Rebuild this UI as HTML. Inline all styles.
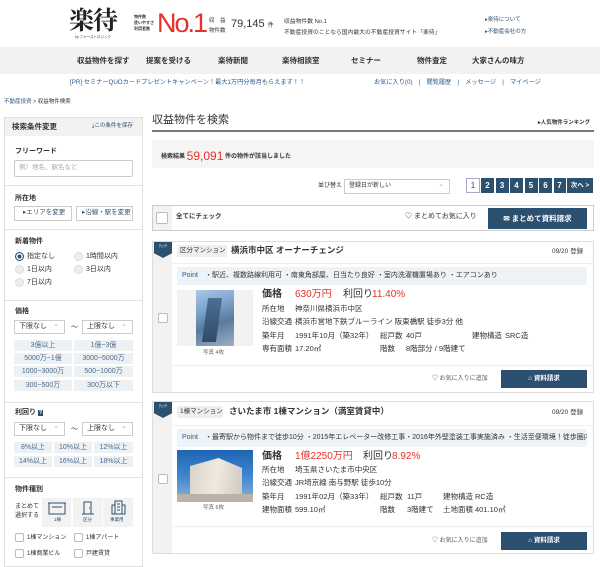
<!DOCTYPE html>
<html><head><meta charset="utf-8">
<style>
*{margin:0;padding:0;box-sizing:border-box}
body{width:600px;height:560px;overflow:hidden;background:#fff;font-family:"Liberation Sans","Noto Sans CJK JP",sans-serif;color:#333;position:relative}
.t{position:absolute;white-space:nowrap;line-height:1}
.b{position:absolute}
.nav span{position:absolute;top:57px;font-size:7.5px;font-weight:bold;color:#333;line-height:1}
.chip{position:absolute;background:#eef1f4;color:#4a6a8a;font-size:7px;text-align:center;line-height:11px;height:11px}
.sel{position:absolute;border:1px solid #ccc;background:#fff;font-size:7px;line-height:12px;padding-left:4px;height:14px}
.sel:after{content:"⌄";position:absolute;right:5px;top:-2px;color:#aaa;font-size:7px}
.radio{position:absolute;width:9px;height:9px;border-radius:50%;background:#eee;border:1px solid #ddd}
.cb{position:absolute;width:9px;height:9px;border:1px solid #bbb;border-radius:2px;background:#fff}
.lbl{position:absolute;font-size:7px;line-height:1;white-space:nowrap}
.hr{position:absolute;height:1px;background:#e3e3e3}
.pg{position:absolute;top:178px;height:15px;background:#2c5070;color:#fff;font-size:8px;text-align:center;line-height:15px;font-weight:bold}
.row{position:absolute;font-size:7.5px;line-height:1;white-space:nowrap}
.btn{position:absolute;background:#2c5070;color:#fff;font-size:7.5px;font-weight:bold;text-align:center}
.tag{position:absolute;width:18px;height:16px;background:#2c5070;color:#fff;font-size:4px;text-align:center;line-height:8px;clip-path:polygon(0 0,100% 0,100% 70%,50% 100%,0 70%)}
</style></head><body>

<!-- header -->
<div class="t" style="left:69px;top:7px;font-size:25px;font-weight:bold;color:#222;font-family:'Noto Serif CJK SC',serif;letter-spacing:-1px">楽待</div>
<div class="t" style="left:75px;top:36px;font-size:3.5px;color:#333">by ファーストロジック</div>
<div class="t" style="left:134px;top:14px;font-size:4px;line-height:6px;font-weight:bold">物件数<br>使いやすさ<br>利用者数</div>
<div class="t" style="left:157px;top:10px;font-size:27px;color:#e8302a;letter-spacing:-2px">No.1</div>
<div class="t" style="left:209px;top:16px;font-size:5.5px;line-height:10px">収　益<br>物件数</div>
<div class="t" style="left:231px;top:19px;font-size:11px">79,145 <span style="font-size:6px">件</span></div>
<div class="t" style="left:284px;top:17px;font-size:5.8px;line-height:11px">収益物件数 No.1<br>不動産投資のことなら国内最大の不動産投資サイト「楽待」</div>
<div class="t" style="left:485px;top:14px;font-size:5.5px;line-height:12px;color:#2c5070">▸楽待について<br>▸不動産会社の方</div>

<div class="b" style="left:0;top:47px;width:600px;height:27px;background:#f2f2f2"></div>
<div class="nav">
<span style="left:77px">収益物件を探す</span><span style="left:146px">提案を受ける</span><span style="left:218px">楽待新聞</span><span style="left:282px">楽待相談室</span><span style="left:351px">セミナー</span><span style="left:417px">物件査定</span><span style="left:472px">大家さんの味方</span>
</div>
<div class="t" style="left:70px;top:80px;font-size:6.2px;color:#2c5a8a">[PR] セミナーQUOカードプレゼントキャンペーン！最大1万円分毎月もらえます！！</div>
<div class="t" style="left:374px;top:80px;font-size:6.2px;color:#2c5a8a">お気に入り(0)　|　閲覧履歴　|　メッセージ　|　マイページ</div>
<div class="t" style="left:4px;top:100px;font-size:5.5px"><span style="color:#2c5a8a">不動産投資</span> &gt; 収益物件検索</div>

<!-- sidebar -->
<div class="b" style="left:4px;top:117px;width:139px;height:450px;border:1px solid #e0e0e0"></div>
<div class="b" style="left:5px;top:118px;width:137px;height:18px;background:#f2f2f2"></div>
<div class="t" style="left:12px;top:123px;font-size:7.5px;font-weight:bold">検索条件変更</div>
<div class="t" style="left:92px;top:124px;font-size:5.5px;color:#2c5070">⤓この条件を保存</div>
<div class="t" style="left:15px;top:148px;font-size:7px;font-weight:bold">フリーワード</div>
<div class="b" style="left:14px;top:160px;width:119px;height:17px;border:1px solid #ccc;border-radius:2px"></div>
<div class="t" style="left:19px;top:165px;font-size:6.5px;color:#aaa">例）地名、駅名など</div>
<div class="hr" style="left:5px;top:185px;width:137px"></div>
<div class="t" style="left:15px;top:195px;font-size:7px;font-weight:bold">所在地</div>
<div class="b" style="left:14px;top:206px;width:58px;height:15px;border:1px solid #ccc"></div>
<div class="b" style="left:76px;top:206px;width:57px;height:15px;border:1px solid #ccc"></div>
<div class="t" style="left:23px;top:210px;font-size:6.5px;color:#2c5070">▸エリアを変更</div>
<div class="t" style="left:82px;top:210px;font-size:6.5px;color:#2c5070">▸沿線・駅を変更</div>
<div class="hr" style="left:5px;top:229px;width:137px"></div>
<div class="t" style="left:15px;top:238px;font-size:7px;font-weight:bold">新着物件</div>
<div class="radio" style="left:15px;top:252px;background:#2c5070;border-color:#2c5070;box-shadow:inset 0 0 0 1.5px #fff"></div>
<div class="lbl" style="left:27px;top:253px">指定なし</div>
<div class="radio" style="left:74px;top:252px"></div><div class="lbl" style="left:86px;top:253px">1時間以内</div>
<div class="radio" style="left:15px;top:265px"></div><div class="lbl" style="left:27px;top:266px">1日以内</div>
<div class="radio" style="left:74px;top:265px"></div><div class="lbl" style="left:86px;top:266px">3日以内</div>
<div class="radio" style="left:15px;top:278px"></div><div class="lbl" style="left:27px;top:279px">7日以内</div>
<div class="hr" style="left:5px;top:300px;width:137px"></div>
<div class="t" style="left:15px;top:308px;font-size:7px;font-weight:bold">価格</div>
<div class="sel" style="left:14px;top:320px;width:51px">下限なし</div>
<div class="t" style="left:71px;top:324px;font-size:7px">〜</div>
<div class="sel" style="left:82px;top:320px;width:51px">上限なし</div>
<div class="chip" style="left:14px;top:340px;width:58px">3億以上</div><div class="chip" style="left:74px;top:340px;width:59px">1億~3億</div>
<div class="chip" style="left:14px;top:353px;width:58px">5000万~1億</div><div class="chip" style="left:74px;top:353px;width:59px">3000~5000万</div>
<div class="chip" style="left:14px;top:366px;width:58px">1000~3000万</div><div class="chip" style="left:74px;top:366px;width:59px">500~1000万</div>
<div class="chip" style="left:14px;top:380px;width:58px">300~500万</div><div class="chip" style="left:74px;top:380px;width:59px">300万以下</div>
<div class="hr" style="left:5px;top:402px;width:137px"></div>
<div class="t" style="left:15px;top:409px;font-size:7px;font-weight:bold">利回り <span style="background:#2c5070;color:#fff;font-size:5px;padding:0 1px">?</span></div>
<div class="sel" style="left:14px;top:422px;width:51px">下限なし</div>
<div class="t" style="left:71px;top:426px;font-size:7px">〜</div>
<div class="sel" style="left:82px;top:422px;width:51px">上限なし</div>
<div class="chip" style="left:14px;top:442px;width:38px">8%以上</div><div class="chip" style="left:54px;top:442px;width:38px">10%以上</div><div class="chip" style="left:94px;top:442px;width:39px">12%以上</div>
<div class="chip" style="left:14px;top:456px;width:38px">14%以上</div><div class="chip" style="left:54px;top:456px;width:38px">16%以上</div><div class="chip" style="left:94px;top:456px;width:39px">18%以上</div>
<div class="hr" style="left:5px;top:477px;width:137px"></div>
<div class="t" style="left:15px;top:486px;font-size:7px;font-weight:bold">物件種別</div>
<div class="t" style="left:15px;top:503px;font-size:6px;line-height:9px">まとめて<br>選択する</div>
<div class="b" style="left:42px;top:498px;width:29px;height:29px;background:#f2f2f2"></div>
<div class="b" style="left:73px;top:498px;width:29px;height:29px;background:#f2f2f2"></div>
<div class="b" style="left:103px;top:498px;width:30px;height:29px;background:#f2f2f2"></div>
<svg class="b" style="left:48px;top:501px" width="18" height="14" viewBox="0 0 18 14" fill="none" stroke="#2c5070" stroke-width="1"><rect x="1" y="2" width="16" height="11"/><line x1="0" y1="2" x2="18" y2="2"/><line x1="4" y1="6" x2="14" y2="6"/></svg>
<svg class="b" style="left:81px;top:501px" width="14" height="14" viewBox="0 0 14 14" fill="none" stroke="#2c5070" stroke-width="1"><path d="M3 13V1h7v12M1 13h12M8 7h1"/></svg>
<svg class="b" style="left:111px;top:500px" width="15" height="15" viewBox="0 0 15 15" fill="none" stroke="#2c5070" stroke-width="1"><rect x="4" y="1" width="7" height="13"/><rect x="1" y="5" width="3" height="9"/><rect x="11" y="5" width="3" height="9"/><path d="M6 4h3M6 7h3M6 10h3"/></svg>
<div class="t" style="left:54px;top:518px;font-size:4.5px;color:#2c5070">1棟</div>
<div class="t" style="left:83px;top:518px;font-size:4.5px;color:#2c5070">区分</div>
<div class="t" style="left:110px;top:518px;font-size:4.5px;color:#2c5070">事業用</div>
<div class="cb" style="left:15px;top:533px"></div><div class="lbl" style="left:27px;top:535px;font-size:6px">1棟マンション</div>
<div class="cb" style="left:74px;top:533px"></div><div class="lbl" style="left:86px;top:535px;font-size:6px">1棟アパート</div>
<div class="cb" style="left:15px;top:549px"></div><div class="lbl" style="left:27px;top:551px;font-size:6px">1棟商業ビル</div>
<div class="cb" style="left:74px;top:549px"></div><div class="lbl" style="left:86px;top:551px;font-size:6px">戸建賃貸</div>

<!-- main -->
<div class="t" style="left:152px;top:115px;font-size:11px;color:#333">収益物件を検索</div>
<div class="t" style="left:538px;top:121px;font-size:5.5px;font-weight:bold">▸人気物件ランキング</div>
<div class="b" style="left:152px;top:130px;width:442px;height:1.5px;background:#777"></div>
<div class="b" style="left:152px;top:140px;width:442px;height:28px;background:#f5f5f5"></div>
<div class="t" style="left:161px;top:150px;font-size:6px;font-weight:bold">検索結果 <span style="color:#e8302a;font-size:12px;font-weight:normal;vertical-align:-2px">59,091</span> 件の物件が該当しました</div>
<div class="t" style="left:318px;top:183px;font-size:6px">並び替え</div>
<div class="sel" style="left:344px;top:179px;width:106px;height:15px;font-size:6px;line-height:13px">登録日が新しい</div>
<div class="b" style="left:466px;top:178px;width:14px;height:15px;border:1px solid #aac;color:#2c5070;font-size:8px;text-align:center;line-height:13px">1</div>
<div class="pg" style="left:481px;width:13px">2</div><div class="pg" style="left:495.5px;width:13px">3</div><div class="pg" style="left:510px;width:13px">4</div><div class="pg" style="left:524.5px;width:13px">5</div><div class="pg" style="left:539px;width:13px">6</div><div class="pg" style="left:553.5px;width:12px">7</div><div class="pg" style="left:567px;width:26px;font-size:6.5px">次へ &gt;</div>

<div class="b" style="left:152px;top:205px;width:442px;height:26px;border:1px solid #ccc"></div>
<div class="b" style="left:153px;top:206px;width:19px;height:24px;background:#f2f2f2"></div>
<div class="cb" style="left:156px;top:212px;width:12px;height:12px"></div>
<div class="t" style="left:176px;top:214px;font-size:6.5px;font-weight:bold">全てにチェック</div>
<div class="t" style="left:405px;top:213px;font-size:7px">♡ まとめてお気に入り</div>
<div class="btn" style="left:488px;top:208px;width:99px;height:21px;line-height:21px;font-size:7.5px">✉ まとめて資料請求</div>

<!-- card 1 -->
<div class="b" style="left:152px;top:241px;width:442px;height:152px;border:1px solid #ddd"></div>
<div class="b" style="left:153px;top:242px;width:19px;height:150px;background:#f2f2f2"></div>
<div class="tag" style="left:154px;top:242px">ﾁｪｯｸ</div>
<div class="cb" style="left:158px;top:313px;width:10px;height:10px"></div>
<div class="b" style="left:177px;top:245px;width:50px;height:12px;background:#eee"></div>
<div class="t" style="left:180px;top:248px;font-size:6.5px">区分マンション</div>
<div class="t" style="left:231px;top:246px;font-size:8.5px;font-weight:bold">横浜市中区 オーナーチェンジ</div>
<div class="t" style="left:552px;top:249px;font-size:6.5px">09/20 登録</div>
<div class="hr" style="left:172px;top:263px;width:421px;background:#eee"></div>
<div class="b" style="left:177px;top:267px;width:410px;height:18px;background:#eef3f8;overflow:hidden">
<div class="t" style="left:5px;top:5px;font-size:7px"><span style="color:#2c5a8a">Point</span>　・駅近、複数路線利用可 ・南東角部屋、日当たり良好 ・室内洗濯機置場あり ・エアコンあり</div></div>
<div class="b" style="left:177px;top:290px;width:76px;height:56px;background:#f2f2f2"></div>
<div class="b" style="left:196px;top:290px;width:38px;height:56px;background:linear-gradient(160deg,#a9c8ea 0%,#7aa0c8 35%,#5b7a9c 60%,#9db0c6 100%)"></div>
<div class="b" style="left:205px;top:298px;width:14px;height:44px;background:linear-gradient(#4b6f96,#2f4c6c);transform:skewX(-8deg)"></div>
<div class="t" style="left:203px;top:351px;font-size:5.5px;color:#666">写真 4枚</div>
<div class="t" style="left:262px;top:290px;font-size:10px;font-weight:bold">価格</div>
<div class="t" style="left:295px;top:290px;font-size:10px;color:#e8302a">630万円</div>
<div class="t" style="left:343px;top:290px;font-size:10px">利回り</div>
<div class="t" style="left:372px;top:290px;font-size:10px;color:#e8302a">11.40%</div>
<div class="row" style="left:262px;top:305px">所在地</div><div class="row" style="left:295px;top:305px">神奈川県横浜市中区</div>
<div class="row" style="left:262px;top:318px">沿線交通</div><div class="row" style="left:295px;top:318px">横浜市営地下鉄ブルーライン 阪東橋駅 徒歩3分 他</div>
<div class="row" style="left:262px;top:332px">築年月</div><div class="row" style="left:295px;top:332px">1991年10月（築32年）</div>
<div class="row" style="left:380px;top:332px">総戸数</div><div class="row" style="left:406px;top:332px">40戸</div>
<div class="row" style="left:472px;top:332px">建物構造</div><div class="row" style="left:505px;top:332px">SRC造</div>
<div class="row" style="left:262px;top:345px">専有面積</div><div class="row" style="left:295px;top:345px">17.20㎡</div>
<div class="row" style="left:380px;top:345px">階数</div><div class="row" style="left:406px;top:345px">8階部分 / 9階建て</div>
<div class="hr" style="left:172px;top:365px;width:421px;background:#eee"></div>
<div class="t" style="left:432px;top:376px;font-size:6px;color:#555">♡ お気に入りに追加</div>
<div class="btn" style="left:501px;top:370px;width:86px;height:18px;line-height:18px;font-size:6.5px">⌂ 資料請求</div>

<!-- card 2 -->
<div class="b" style="left:152px;top:401px;width:442px;height:153px;border:1px solid #ddd"></div>
<div class="b" style="left:153px;top:402px;width:19px;height:151px;background:#f2f2f2"></div>
<div class="tag" style="left:154px;top:402px">ﾁｪｯｸ</div>
<div class="cb" style="left:158px;top:474px;width:10px;height:10px"></div>
<div class="b" style="left:177px;top:406px;width:46px;height:12px;background:#eee"></div>
<div class="t" style="left:180px;top:409px;font-size:6.5px">1棟マンション</div>
<div class="t" style="left:229px;top:407px;font-size:8.5px;font-weight:bold">さいたま市 1棟マンション（満室賃貸中）</div>
<div class="t" style="left:552px;top:410px;font-size:6.5px">09/20 登録</div>
<div class="hr" style="left:172px;top:425px;width:421px;background:#eee"></div>
<div class="b" style="left:177px;top:429px;width:410px;height:18px;background:#eef3f8;overflow:hidden">
<div class="t" style="left:5px;top:5px;font-size:7px"><span style="color:#2c5a8a">Point</span>　・最寄駅から物件まで徒歩10分 ・2015年エレベーター改修工事・2016年外壁塗装工事実施済み ・生活至便環境！徒歩圏内にス...</div></div>
<div class="b" style="left:177px;top:450px;width:76px;height:52px;background:linear-gradient(#1e64b4 0%,#3f86d0 50%,#8fb4d8 100%)"></div>
<div class="b" style="left:190px;top:458px;width:52px;height:40px;background:linear-gradient(100deg,#d9d2c8 0%,#efe9e0 50%,#cfc8bf 100%);clip-path:polygon(0 20%,55% 0,100% 25%,100% 100%,0 100%)"></div>
<div class="b" style="left:177px;top:494px;width:76px;height:8px;background:#b8b2a8"></div>
<div class="t" style="left:203px;top:506px;font-size:5.5px;color:#666">写真 6枚</div>
<div class="t" style="left:262px;top:452px;font-size:10px;font-weight:bold">価格</div>
<div class="t" style="left:295px;top:452px;font-size:10px;color:#e8302a">1億2250万円</div>
<div class="t" style="left:363px;top:452px;font-size:10px">利回り</div>
<div class="t" style="left:392px;top:452px;font-size:10px;color:#e8302a">8.92%</div>
<div class="row" style="left:262px;top:466px">所在地</div><div class="row" style="left:295px;top:466px">埼玉県さいたま市中央区</div>
<div class="row" style="left:262px;top:479px">沿線交通</div><div class="row" style="left:295px;top:479px">JR埼京線 南与野駅 徒歩10分</div>
<div class="row" style="left:262px;top:493px">築年月</div><div class="row" style="left:295px;top:493px">1991年02月（築33年）</div>
<div class="row" style="left:380px;top:493px">総戸数</div><div class="row" style="left:407px;top:493px">11戸</div>
<div class="row" style="left:443px;top:493px">建物構造</div><div class="row" style="left:475px;top:493px">RC造</div>
<div class="row" style="left:262px;top:506px">建物面積</div><div class="row" style="left:295px;top:506px">599.10㎡</div>
<div class="row" style="left:380px;top:506px">階数</div><div class="row" style="left:407px;top:506px">3階建て</div>
<div class="row" style="left:443px;top:506px">土地面積</div><div class="row" style="left:475px;top:506px">401.10㎡</div>
<div class="hr" style="left:172px;top:526px;width:421px;background:#eee"></div>
<div class="t" style="left:432px;top:538px;font-size:6px;color:#555">♡ お気に入りに追加</div>
<div class="btn" style="left:501px;top:532px;width:86px;height:18px;line-height:18px;font-size:6.5px">⌂ 資料請求</div>
</body></html>
